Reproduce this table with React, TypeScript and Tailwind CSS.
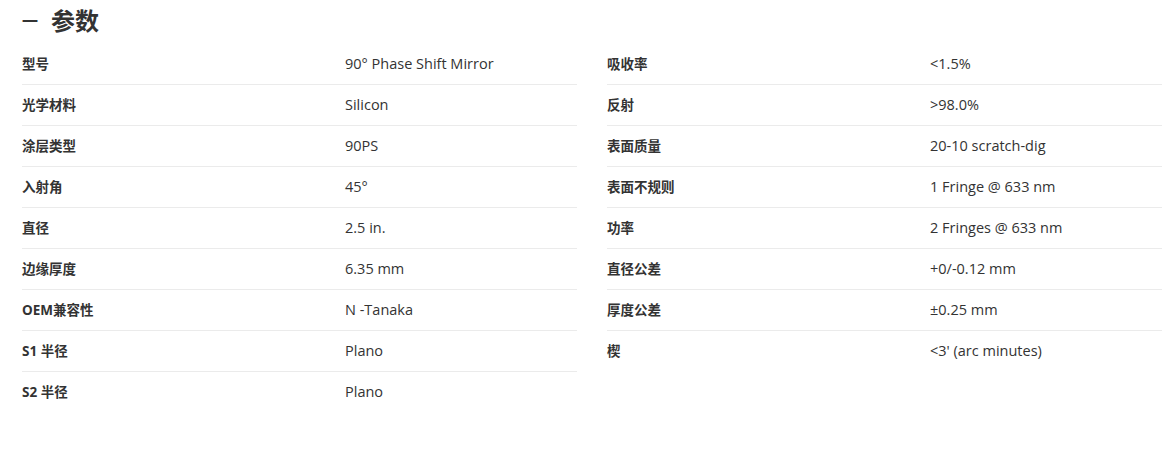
import React from "react";

const left: [string, string][] = [
  ["型号", "90° Phase Shift Mirror"],
  ["光学材料", "Silicon"],
  ["涂层类型", "90PS"],
  ["入射角", "45°"],
  ["直径", "2.5 in."],
  ["边缘厚度", "6.35 mm"],
  ["OEM兼容性", "N -Tanaka"],
  ["S1 半径", "Plano"],
  ["S2 半径", "Plano"],
];

const right: [string, string][] = [
  ["吸收率", "<1.5%"],
  ["反射", ">98.0%"],
  ["表面质量", "20-10 scratch-dig"],
  ["表面不规则", "1 Fringe @ 633 nm"],
  ["功率", "2 Fringes @ 633 nm"],
  ["直径公差", "+0/-0.12 mm"],
  ["厚度公差", "±0.25 mm"],
  ["楔", "<3' (arc minutes)"],
];

function SpecColumn({ rows }: { rows: [string, string][] }) {
  return (
    <div className="w-[555px] flex flex-col">
      {rows.map(([label, value], i) => (
        <div
          key={label}
          className={`flex items-center h-[41px] ${i < rows.length - 1 ? "border-b border-[#ebebeb]" : ""}`}
        >
          <div className="w-[323px] text-[13.5px] font-bold text-[#333]">{label}</div>
          <div className="text-[14.5px] text-[#333] pb-[1px]">{value}</div>
        </div>
      ))}
    </div>
  );
}

export default function App() {
  return (
    <div
      className="w-[1170px] h-[462px] bg-white pl-[22px]"
      style={{ fontFamily: '"Open Sans", "Noto Sans CJK SC", sans-serif' }}
    >
      <h2 className="h-[44px] flex items-center gap-[13px] text-[24px] font-bold text-[#333] pb-[2px]">
        <span className="text-[16px] font-bold">一</span>
        <span>参数</span>
      </h2>
      <div className="flex gap-[30px]">
        <SpecColumn rows={left} />
        <SpecColumn rows={right} />
      </div>
    </div>
  );
}
